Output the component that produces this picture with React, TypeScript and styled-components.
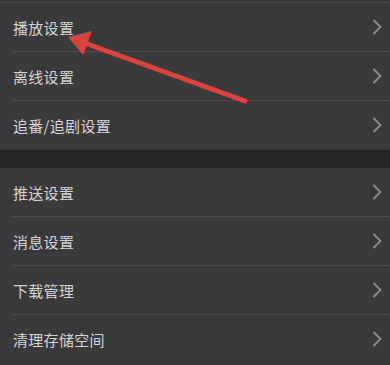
import React from "react";
import styled, { createGlobalStyle } from "styled-components";

const GlobalStyle = createGlobalStyle`
  html, body {
    margin: 0;
    padding: 0;
    background: #3a3a3c;
  }
  body {
    font-family: "Noto Sans CJK SC", "Noto Sans", sans-serif;
  }
`;

const groups: string[][] = [
  ["播放设置", "离线设置", "追番/追剧设置"],
  ["推送设置", "消息设置", "下载管理", "清理存储空间"],
];

const Chevron = () => (
  <svg width="10" height="16" viewBox="0 0 10 16">
    <polyline
      points="1.5,1 8.5,8 1.5,15"
      fill="none"
      stroke="#8e8e90"
      strokeWidth="1.8"
    />
  </svg>
);

const App: React.FC = () => {
  return (
    <Page>
      <GlobalStyle />
      <TopLine />
      {groups.map((items, gi) => (
        <React.Fragment key={gi}>
          {gi > 0 && <Band />}
          <Group>
            {items.map((label, i) => (
              <Row key={label} last={i === items.length - 1}>
                <Label>{label}</Label>
                <Chevron />
              </Row>
            ))}
          </Group>
        </React.Fragment>
      ))}
      <Arrow width="390" height="365" viewBox="0 0 390 365">
        <line
          x1="82"
          y1="42"
          x2="245"
          y2="101"
          stroke="#d9443d"
          strokeWidth="5"
          strokeLinecap="round"
        />
        <polygon points="68,37 92,31 83,55" fill="#d9443d" />
      </Arrow>
    </Page>
  );
};

export default App;

const Page = styled.div`
  position: relative;
  width: 390px;
  height: 365px;
  overflow: hidden;
  background: #3a3a3c;
  padding-top: 2px;
  box-sizing: border-box;
`;

const TopLine = styled.div`
  height: 1px;
  background: #4b4b4d;
`;

const Group = styled.div`
  display: flex;
  flex-direction: column;
  padding-left: 12px;
`;

const Row = styled.div<{ last: boolean }>`
  height: 48px;
  display: flex;
  align-items: center;
  justify-content: space-between;
  padding-right: 8px;
  border-bottom: 1px solid ${({ last }) => (last ? "transparent" : "#4b4b4d")};
`;

const Label = styled.div`
  padding-left: 1px;
  color: #d4d4d4;
  font-size: 15px;
  letter-spacing: 0.3px;
`;

const Band = styled.div`
  height: 18px;
  background: #252527;
`;

const Arrow = styled.svg`
  position: absolute;
  left: 0;
  top: 0;
  pointer-events: none;
`;
